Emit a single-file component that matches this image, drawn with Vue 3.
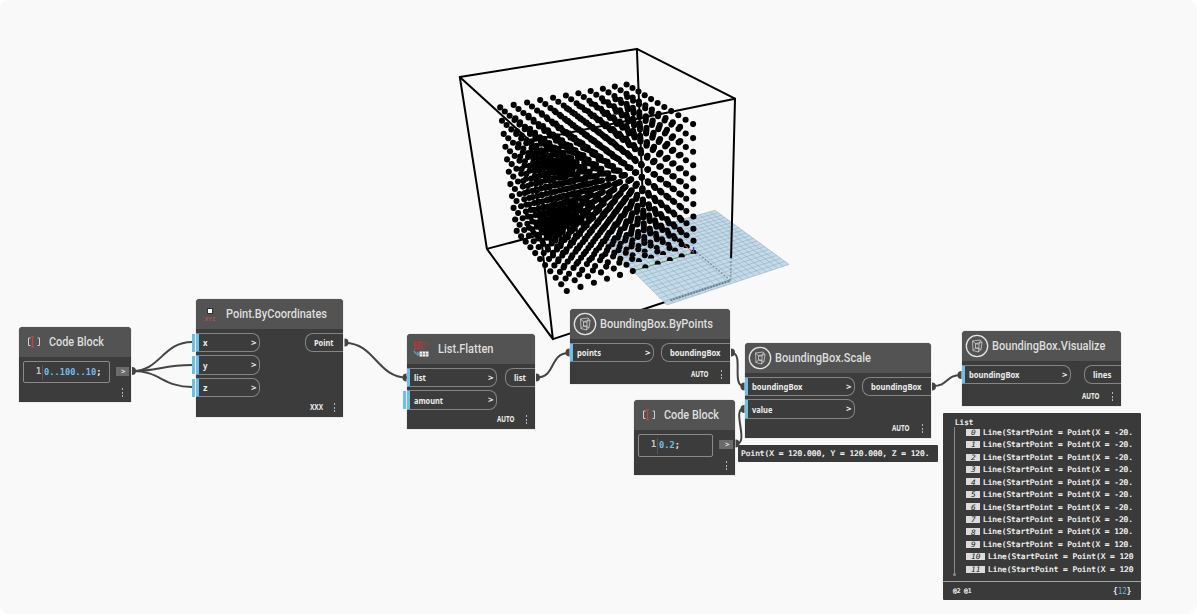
<script setup>
import { defineComponent, h } from 'vue'

// Perspective camera coefficients; model units are hundreds
const cam = [693.5074, 21.5376, -171.2884, -61.2370, 252.6778, -25.0949, 15.4351, -139.4194, 0.1311, -0.0787, -0.0877]
const project = (x, y, z) => {
  const w = 1 + cam[8] * x + cam[9] * y + cam[10] * z
  return [
    (cam[0] + cam[1] * x + cam[2] * y + cam[3] * z) / w,
    (cam[4] + cam[5] * x + cam[6] * y + cam[7] * z) / w,
  ]
}
const seg = (a, b) => `M${project(...a).map(n => n.toFixed(1))}L${project(...b).map(n => n.toFixed(1))}`

const dots = []
const halfDots = []
for (let i = 0; i <= 10; i++)
  for (let j = 0; j <= 10; j++)
    for (let k = 0; k <= 10; k++) {
      const [x, y] = project(i / 10, j / 10, k / 10)
      ;(k === 0 && i <= 5 && j < 5 ? halfDots : dots).push([x.toFixed(1), y.toFixed(1)])
    }

const plane = [[0.5, 0.5], [-0.5, 0.5], [-0.5, -0.5], [0.5, -0.5]].map(([x, y]) => project(x, y, 0).map(n => n.toFixed(1)).join()).join(' ')
let gridPath = ''
for (let t = 0; t <= 20; t++) {
  const s = -0.5 + t / 20
  gridPath += seg([s, -0.5, 0], [s, 0.5, 0]) + seg([-0.5, s, 0], [0.5, s, 0])
}

const lo = -0.2
const hi = 1.2
const boxPath = [
  seg([lo, lo, hi], [hi, lo, hi]), seg([hi, lo, hi], [hi, hi, hi]), seg([hi, hi, hi], [lo, hi, hi]), seg([lo, hi, hi], [lo, lo, hi]),
  seg([hi, hi, lo], [hi, hi, hi]), seg([lo, hi, lo], [lo, hi, hi]),
  seg([hi, hi, lo], [lo, hi, lo]), seg([hi, hi, lo], [hi, 0.6, lo]),
  seg([lo, hi, lo], [lo, 0.31, lo]),
].join('')
// These two edges stay visible in front of the ground plane
const frontPath = seg([lo, lo, 0], [lo, lo, hi]) + seg([hi, lo, 0.02], [hi, lo, hi])
const hiddenPath = seg([lo, lo, lo], [lo, lo, 0]) + seg([lo, lo, lo], [0.35, lo, lo])
const bottomPath = seg([lo, 0.31, lo], [lo, lo, lo])
const yAxis = seg([0, 0, 0], [0, 0.5, 0])
const xAxis = seg([0, 0, 0], [0.13, 0, 0])

// Text condensed to an exact width
const Fit = defineComponent({
  props: { text: String, w: Number, size: Number, kind: String },
  setup: p => () => h('svg', { class: ['fit', p.kind], width: p.w, height: p.size * 1.4 },
    [h('text', { x: 0, y: p.size * 1.05, 'font-size': p.size, textLength: p.w, lengthAdjust: 'spacingAndGlyphs' }, p.text)]),
})

const nodes = [
  { id: 'points', x: 196, y: 299, w: 147, ht: 118, icon: 'xyz', title: 'Point.ByCoordinates', tx: 30, tw: 101, lace: 'XXX', lw: 13, lx: 113.5,
    pw: 63.5, ins: [['x', 4.5, 1], ['y', 4.5, 1], ['z', 4.5, 1]], out: ['Point', 19.5, 38, 8] },
  { id: 'flatten', x: 407, y: 334, w: 128, ht: 95, icon: 'flatten', title: 'List.Flatten', tx: 30.5, tw: 55.5, lace: 'AUTO', lw: 17.5, lx: 89.5,
    pw: 89.5, ins: [['list', 12, 0], ['amount', 29, 1]], out: ['list', 12, 30, 7.5] },
  { id: 'bypoints', x: 570, y: 309, w: 160, ht: 75, icon: 'box', title: 'BoundingBox.ByPoints', tx: 29.5, tw: 113, lace: 'AUTO', lw: 17.5, lx: 121,
    pw: 84, ins: [['points', 24, 0]], out: ['boundingBox', 50.5, 69, 8] },
  { id: 'scale', x: 745, y: 343, w: 186, ht: 95, icon: 'box', title: 'BoundingBox.Scale', tx: 30, tw: 96, lace: 'AUTO', lw: 17.5, lx: 147,
    pw: 110, ins: [['boundingBox', 50.5, 0], ['value', 20.5, 0]], out: ['boundingBox', 50.5, 69, 8] },
  { id: 'visualize', x: 962, y: 331, w: 159, ht: 75, icon: 'box', title: 'BoundingBox.Visualize', tx: 29.5, tw: 113.5, lace: 'AUTO', lw: 17.5, lx: 120,
    pw: 109, ins: [['boundingBox', 50.5, 0]], out: ['lines', 18.5, 37, 8] },
]
const codeBlocks = [
  { id: 'range', x: 19, y: 327, w: 112, ht: 75, ew: 87, eh: 22, code: '0..100..10', full: 57.5, pw: 13 },
  { id: 'factor', x: 634, y: 400, w: 101, ht: 75, ew: 75, eh: 23, code: '0.2', full: 21, pw: 14 },
]
const rows = Array.from({ length: 12 }, (_, i) => ({
  i,
  text: i < 8 ? 'Line(StartPoint = Point(X = -20.' : i < 10 ? 'Line(StartPoint = Point(X = 120.' : 'Line(StartPoint = Point(X = 120',
  w: i < 10 ? 150 : 145.5,
}))
const wires = [
  'M133 371C160 371 163 342 192 342', 'M133 371C158 371 163 365 192 365', 'M133 371C160 371 163 387 192 387',
  'M345 343C375 343 377 377.500 407 377.500', 'M537 377.500C556 377.500 549 353 569 353',
  'M732 353C744 353 731 386 744 386', 'M736 444C750 444 731 408.500 744 408.500', 'M933 386C948 386 946 375 961 375',
]
const jointsOut = [[132, 371], [344.5, 342.5], [536, 377.5], [731, 352.5], [735.5, 443.5], [932, 386.5]]
const jointsIn = [[406.5, 377.5], [569.5, 352.5], [744.5, 386.5], [744.5, 409], [961.5, 375]]
</script>

<template>
  <main class="workspace">
    <svg class="scene" width="1197" height="614">
      <defs>
        <clipPath id="upper"><rect x="-4" y="-4" width="8" height="5" /></clipPath>
        <symbol id="half" overflow="visible"><circle r="3" clip-path="url(#upper)" /></symbol>
      </defs>
      <path :d="boxPath" class="edge" />
      <polygon :points="plane" class="plane" />
      <path :d="gridPath" class="grid" />
      <path :d="bottomPath" class="bottom-edge" />
      <path :d="bottomPath" class="bottom-dash" />
      <path :d="hiddenPath" class="hidden-edge" />
      <path :d="frontPath" class="edge" />
      <path :d="yAxis" class="y-axis" />
      <g>
        <circle v-for="(d, n) in dots" :key="n" :cx="d[0]" :cy="d[1]" r="3.05" />
        <use v-for="(d, n) in halfDots" :key="'h' + n" href="#half" :x="d[0]" :y="d[1]" />
      </g>
      <path :d="xAxis" class="x-axis" />
      <path d="M693.500 247V252" class="z-axis" />
    </svg>

    <section v-for="n in nodes" :key="n.id" class="node" :style="{ left: n.x + 'px', top: n.y + 'px', width: n.w + 'px', height: n.ht + 'px' }">
      <header>
        <svg v-if="n.icon === 'box'" class="round" width="24" height="24" viewBox="0 0 24 24">
          <circle cx="12" cy="12" r="10.700" class="ring" />
          <path d="M7.500 7L15 6L17 8.500L16 15.500L13.500 18L8 16.500ZM7.500 7L10.500 9.500L17 8.500M10.500 9.500V14L8 16.500M10.500 14L16 15.500M10.500 10H14V14H10.500M14 10L15.500 6.500M14 14L13.500 18" class="wire-box" />
        </svg>
        <svg v-else-if="n.icon === 'xyz'" class="small" width="16" height="18" viewBox="0 0 16 18">
          <rect x="5.500" y="2.500" width="5" height="5" fill="#fff" stroke="#333" />
          <text x="2.500" y="15" font-size="6" textLength="11" lengthAdjust="spacingAndGlyphs" class="xyz">XYZ</text>
        </svg>
        <svg v-else class="small" width="16" height="18" viewBox="0 0 16 18">
          <path d="M1 .5h6.500v5H1zM1 6.500h2.500v2H1zM4.500 6.500H7v2H4.500zM8 6.500h2.500v2H8z" fill="#b03c3c" />
          <path d="M8.500 .5h1.500v5H8.500z" fill="#a04040" />
          <path d="M4.200 .5V5.500M1 3H7.500" stroke="#7a3636" stroke-width=".6" />
          <path d="M12 5.500V1.500H15V5.500" fill="none" stroke="#8d4646" />
          <path d="M1 9.500Q2 13.500 5.500 13M4 11L6 13L4 14.800" fill="none" stroke="#5f95bd" stroke-width="1.200" />
          <path d="M6.500 10.500h9v5h-9z" fill="#f4f4f4" />
          <path d="M9.500 10.500v5M12.500 10.500v5M6.500 13h9" stroke="#666" stroke-width=".6" />
        </svg>
        <Fit class="title" kind="sans" :text="n.title" :w="n.tw" :size="12.5" :style="{ left: n.tx + 'px' }" />
      </header>
      <div class="ports">
        <div class="inputs">
          <div v-for="p in n.ins" :key="p[0]" class="in" :style="{ width: n.pw + 'px' }">
            <i v-if="p[2]" class="tick" />
            <Fit kind="bold" :text="p[0]" :w="p[1]" :size="9.2" />
            <Fit kind="bold" text=">" :w="5.5" :size="9.5" />
          </div>
        </div>
        <div class="out" :style="{ width: n.out[2] + 'px', paddingLeft: n.out[3] + 'px' }">
          <Fit kind="bold" :text="n.out[0]" :w="n.out[1]" :size="9.2" />
        </div>
      </div>
      <Fit class="lace" kind="bold" :text="n.lace" :w="n.lw" :size="8" :style="{ left: n.lx + 'px' }" />
      <span class="more"><i /><i /><i /></span>
    </section>

    <section v-for="c in codeBlocks" :key="c.id" class="node code" :style="{ left: c.x + 'px', top: c.y + 'px', width: c.w + 'px', height: c.ht + 'px' }">
      <header>
        <svg class="brackets" width="14" height="12" viewBox="0 0 14 12">
          <path d="M3.500 2H1.500V9.500H3.500M10.500 2H12.500V9.500H10.500" fill="none" stroke="#d0d0d0" />
          <path d="M4 .7H7M4 10.800H7M5.500 .7V10.800" fill="none" stroke="#c24341" stroke-width="1.200" />
        </svg>
        <Fit class="title" kind="sans" text="Code Block" :w="55" :size="12.5" />
      </header>
      <div class="code-row">
        <div class="editor" :style="{ width: c.ew + 'px', height: c.eh + 'px' }">
          <span class="line-no"><Fit kind="mono" text="1" :w="5.2" :size="9" /></span>
          <svg class="fit mono" :width="c.full" height="13">
            <text x="0" y="9.500" font-size="9" :textLength="c.full" lengthAdjust="spacingAndGlyphs"><tspan class="num">{{ c.code }}</tspan><tspan class="semi">;</tspan></text>
          </svg>
        </div>
        <div class="code-out" :style="{ width: c.pw + 'px' }"><Fit kind="bold" text=">" :w="4.5" :size="7.5" /></div>
      </div>
      <span class="more"><i /><i /><i /></span>
    </section>

    <div class="bubble"><Fit kind="output" text="Point(X = 120.000, Y = 120.000, Z = 120." :w="188.5" :size="7.6" /></div>

    <section class="preview">
      <Fit class="list-name" kind="output" text="List" :w="18.5" :size="7.6" />
      <div class="tree">
        <div v-for="r in rows" :key="r.i" class="row">
          <span class="index" :class="{ wide: r.i > 9 }"><Fit kind="idx" :text="String(r.i)" :w="r.i > 9 ? 9.4 : 4.7" :size="7.4" /></span>
          <Fit kind="output" :text="r.text" :w="r.w" :size="7.6" />
        </div>
      </div>
      <footer>
        <span class="levels"><Fit kind="output" text="@2 @1" :w="18.5" :size="6.5" /></span>
        <svg class="fit output" width="18.500" height="12"><text x="0" y="9" font-size="8" textLength="18.500" lengthAdjust="spacingAndGlyphs">{<tspan fill="#5fb4e5">12</tspan>}</text></svg>
      </footer>
    </section>

    <svg class="wires" width="1197" height="614">
      <path v-for="w in wires" :key="w" :d="w" />
      <path v-for="j in jointsOut" :key="j.join()" class="joint" :d="`M${j[0]} ${j[1] - 4}A4 4 0 0 1 ${j[0]} ${j[1] + 4}Z`" />
      <path v-for="j in jointsIn" :key="j.join()" class="joint" :d="`M${j[0]} ${j[1] - 4}A4 4 0 0 0 ${j[0]} ${j[1] + 4}Z`" />
    </svg>
  </main>
</template>

<style>
body { background: #fff; }
.fit { display: block; flex: none; overflow: visible; }
.fit text { fill: #ececec; }
.sans { font-family: Roboto, sans-serif; font-weight: 500; }
.fit.sans text { fill: #dedede; }
.bold { font-family: "Noto Sans", sans-serif; font-weight: 700; }
.mono { font-family: "DejaVu Sans Mono", monospace; font-weight: 700; }
.output { font-family: "DejaVu Sans Mono", monospace; font-weight: 400; }
.idx { font-family: "DejaVu Sans Mono", monospace; font-style: italic; }
.fit.idx text { fill: #222; }
.fit.output text { fill: #fff; stroke: #fff; stroke-width: .2; }
.fit.output tspan { stroke: none; }
</style>

<style scoped>
.workspace { position: relative; width: 1197px; height: 614px; overflow: hidden; background: #f9f9f9; border-radius: 9px; }
.scene, .wires { position: absolute; left: 0; top: 0; }
.wires { pointer-events: none; }
.wires path { fill: none; stroke: #444; stroke-width: 2; }
.wires .joint { fill: #444; stroke: none; }
.edge { fill: none; stroke: #000; stroke-width: 2; stroke-linecap: round; }
.plane { fill: #bfd9e8; fill-opacity: .96; }
.grid { fill: none; stroke: #8fabbd; stroke-width: .7; stroke-opacity: .75; }
.bottom-edge { stroke: #94abb8; stroke-width: 2.200; }
.bottom-dash { stroke: #6a808c; stroke-width: 2; stroke-dasharray: 1.500 1.500; }
.hidden-edge { fill: none; stroke: #7d96a4; stroke-width: 1.500; stroke-dasharray: 2 1.500; }
.y-axis { stroke: #4fa653; stroke-width: 1; }
.x-axis { stroke: #c8555a; stroke-width: 1; }
.z-axis { stroke: #3a45d8; stroke-width: 1.200; }

.node { position: absolute; background: #3c3c3c; border-radius: 4px 4px 0 0; box-shadow: 0 0 1px #777; }
.node header { height: 30px; background: #535353; border-radius: 4px 4px 0 0; position: relative; }
.title { position: absolute; top: 6px; }
.code .title { left: 30px; }
.round { position: absolute; left: 2.500px; top: 3px; }
.ring { fill: none; stroke: #e4e4e4; stroke-width: 1.300; }
.wire-box { fill: none; stroke: #cfcfcf; stroke-width: .8; stroke-linejoin: round; }
.small { position: absolute; left: 6px; top: 7px; }
.xyz { fill: #b55252; font-family: "Liberation Sans", sans-serif; font-weight: 700; }
.brackets { position: absolute; left: 7.500px; top: 9px; }
.ports { display: flex; justify-content: space-between; align-items: flex-start; padding-top: 4px; }
.inputs { display: flex; flex-direction: column; gap: 3px; }
.in { position: relative; box-sizing: border-box; height: 19.300px; border: 1px solid #858585; border-left: 3px solid #6ac0e7; border-radius: 0 8px 8px 0; display: flex; align-items: center; justify-content: space-between; padding: 0 2.500px 0 3.500px; }
.tick { position: absolute; left: -7px; top: 0; width: 3px; height: 18px; background: #6ac0e7; }
.out { box-sizing: border-box; height: 19px; border: 1px solid #858585; border-right: 0; border-radius: 8px 0 0 8px; display: flex; align-items: center; }
.lace { position: absolute; bottom: 4px; }
.more { position: absolute; right: 8px; bottom: 5px; display: flex; flex-direction: column; gap: 2px; }
.more i { width: 1.500px; height: 2px; background: #b4b4b4; }
.more { gap: 1.500px; }
.code-row { display: flex; justify-content: space-between; padding: 3.500px 2.500px 0 4px; }
.editor { box-sizing: border-box; border: 1px solid #8a8a8a; border-radius: 2px; display: flex; padding: 3px 0 2px 11.500px; }
.line-no { border-right: 1px solid #606060; padding-right: 1.500px; margin-right: .5px; opacity: .8; }
.num { fill: #6cc0ee; }
.semi { fill: #ececec; }
.code-out { height: 9px; margin-top: 6px; background: #6b6b6b; display: flex; align-items: center; justify-content: flex-end; padding-right: 3px; box-sizing: border-box; }

.bubble { position: absolute; left: 738px; top: 445px; width: 200px; height: 17px; box-sizing: border-box; padding: 3px 3px; background: #3a3a3a; border-radius: 1px; }
.preview { position: absolute; left: 943px; top: 413px; width: 198px; height: 187px; background: #3a3a3a; border-radius: 1px; }
.list-name { margin: 3.500px 0 0 12px; }
.tree { position: absolute; left: 11px; top: 14px; width: 180px; height: 149px; border-left: 1px solid #8b8b8b; box-sizing: border-box; }
.tree::after { content: ""; position: absolute; left: -2px; bottom: 0; width: 3px; height: 3px; background: #8b8b8b; border-radius: 50%; }
.row { display: flex; align-items: center; gap: 3px; height: 12.450px; margin-left: 11px; position: relative; top: -1px; }
.index { flex: none; width: 14px; height: 7px; background: #dcdcdc; display: flex; align-items: center; justify-content: center; }
.index.wide { width: 18.500px; }
.preview footer { position: absolute; left: 0; right: 0; bottom: 0; height: 18px; border-top: 1px solid #a5a5a5; display: flex; align-items: center; justify-content: space-between; padding: 0 10px; }
</style>
